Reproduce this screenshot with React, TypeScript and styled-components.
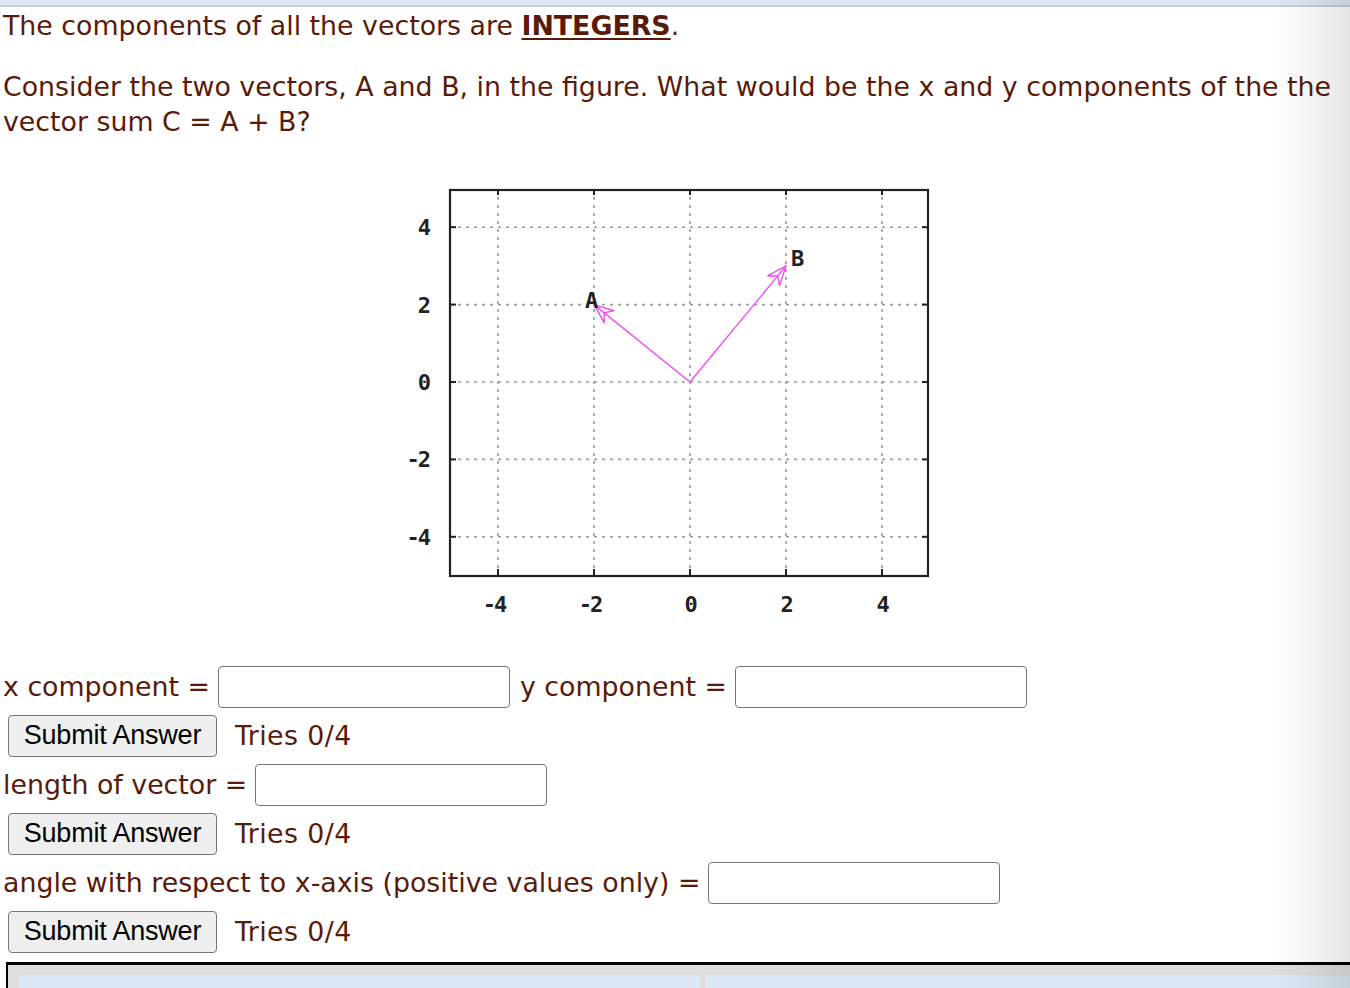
import React from 'react';
import styled, { createGlobalStyle } from 'styled-components';

const GlobalStyle = createGlobalStyle`
  html, body {
    margin: 0;
    padding: 0;
    background: #ffffff;
  }
  body {
    font-family: "DejaVu Sans", Verdana, sans-serif;
    color: #5a1a08;
    overflow: hidden;
  }
`;

const TopBand = styled.div`
  height: 5px;
  background: #dce8f5;
  border-bottom: 2px solid #c9ccd0;
`;

const Page = styled.div`
  padding: 1px 0 0 3px;
  font-size: 26.8px;
  line-height: 35px;
`;

const Para = styled.p<{ gap?: number }>`
  margin: 0 0 ${(p) => p.gap ?? 0}px 0;
  padding-right: 10px;
`;

const Strong = styled.strong`
  text-decoration: underline;
  text-decoration-thickness: 2px;
  text-underline-offset: 3px;
`;

const Figure = styled.div`
  display: flex;
  justify-content: center;
  width: 1350px;
  margin: 36px 0 0 -3px;
  height: 487px;
`;

const Row = styled.div`
  display: flex;
  align-items: center;
  height: 49px;
  white-space: nowrap;
`;

const Label = styled.span`
  margin-right: 8px;
`;

const Field = styled.input`
  width: 292px;
  height: 42px;
  box-sizing: border-box;
  border: 1.5px solid #767676;
  border-radius: 4px;
  background: #fff;
  margin-right: 10px;
  padding: 0 6px;
  font-size: 20px;
`;

const SubmitButton = styled.button`
  margin-left: 5px;
  height: 42px;
  width: 209px;
  box-sizing: border-box;
  border: 1.5px solid #767676;
  border-radius: 4px;
  background: #efefef;
  color: #000;
  font-family: "Liberation Sans", Arial, sans-serif;
  font-size: 27px;
  letter-spacing: -0.2px;
  padding: 0;
`;

const Tries = styled.span`
  margin-left: 18px;
  letter-spacing: 0.4px;
`;

const Frame = styled.div`
  margin: 6px 0 0 6px;
  border-top: 3px solid #000;
  border-left: 2px solid #000;
  background: #dedede;
  padding: 10px 0 0 11px;
  display: grid;
  grid-template-columns: 681px 1fr;
  column-gap: 5px;
  height: 60px;
`;

const Cell = styled.div`
  background: #dce8f5;
`;

const Shade = styled.div`
  position: fixed;
  top: 0;
  right: 0;
  width: 80px;
  height: 100%;
  pointer-events: none;
  background: linear-gradient(to right, rgba(0, 0, 0, 0) 0%, rgba(0, 0, 0, 0.03) 40%, rgba(0, 0, 0, 0.1) 100%);
`;

const X = (u: number) => 290 + 48 * u;
const Y = (v: number) => 207 - 38.7 * v;

function head(x1: number, y1: number, x2: number, y2: number) {
  const a = Math.atan2(y2 - y1, x2 - x1);
  const len = 21;
  const spread = 0.38;
  const lx = x2 - len * Math.cos(a - spread);
  const ly = y2 - len * Math.sin(a - spread);
  const rx = x2 - len * Math.cos(a + spread);
  const ry = y2 - len * Math.sin(a + spread);
  const bx = x2 - 13 * Math.cos(a);
  const by = y2 - 13 * Math.sin(a);
  return `${x2},${y2} ${lx},${ly} ${bx},${by} ${rx},${ry}`;
}

const Plot = () => {
  const ticks = [-4, -2, 0, 2, 4];
  const mag = '#f24cf2';
  const font = "'DejaVu Sans Mono', monospace";
  return (
    <svg width={550} height={450} viewBox="0 0 550 450">
      {ticks.map((t) => (
        <g key={t}>
          <line x1={X(t)} y1={14} x2={X(t)} y2={401} stroke="#9a9a9a" strokeWidth={1.6} strokeDasharray="3 5" />
          <line x1={50} y1={Y(t)} x2={528} y2={Y(t)} stroke="#9a9a9a" strokeWidth={1.6} strokeDasharray="3 5" />
          <line x1={X(t)} y1={14} x2={X(t)} y2={20} stroke="#222" strokeWidth={2} />
          <line x1={X(t)} y1={401} x2={X(t)} y2={394} stroke="#222" strokeWidth={2} />
          <line x1={50} y1={Y(t)} x2={56} y2={Y(t)} stroke="#222" strokeWidth={2} />
          <line x1={528} y1={Y(t)} x2={522} y2={Y(t)} stroke="#222" strokeWidth={2} />
          <text x={29} y={Y(t) + 8} textAnchor="end" fontFamily={font} fontWeight="bold" fontSize={22} letterSpacing={-2} fill="#222">
            {t < 0 ? `-${-t}` : t}
          </text>
          <text x={X(t) + (t < 0 ? -4 : 0)} y={437} textAnchor="middle" fontFamily={font} fontWeight="bold" fontSize={22} letterSpacing={-2} fill="#222">
            {t < 0 ? `-${-t}` : t}
          </text>
        </g>
      ))}
      <rect x={50} y={15} width={478} height={386} fill="none" stroke="#222" strokeWidth={2.2} />
      <line x1={X(0)} y1={Y(0)} x2={X(-2)} y2={Y(2)} stroke={mag} strokeWidth={1.4} />
      <polygon points={head(X(0), Y(0), X(-2), Y(2))} fill="none" stroke={mag} strokeWidth={1.4} />
      <line x1={X(0)} y1={Y(0)} x2={X(2)} y2={Y(3)} stroke={mag} strokeWidth={1.4} />
      <polygon points={head(X(0), Y(0), X(2), Y(3))} fill="none" stroke={mag} strokeWidth={1.4} />
      <text x={185} y={133} fontFamily={font} fontWeight="bold" fontSize={22} fill="#222">A</text>
      <text x={391} y={91} fontFamily={font} fontWeight="bold" fontSize={22} fill="#222">B</text>
    </svg>
  );
};

export default function App() {
  return (
    <>
      <GlobalStyle />
      <TopBand />
      <Page>
        <Para gap={26}>
          The components of all the vectors are <Strong>INTEGERS</Strong>.
        </Para>
        <Para>
          Consider the two vectors, A and B, in the figure. What would be the x and y components of the the vector sum C = A + B?
        </Para>
        <Figure>
          <Plot />
        </Figure>
        <Row>
          <Label>x component =</Label>
          <Field type="text" />
          <Label>y component =</Label>
          <Field type="text" />
        </Row>
        <Row>
          <SubmitButton>Submit Answer</SubmitButton>
          <Tries>Tries 0/4</Tries>
        </Row>
        <Row>
          <Label>length of vector =</Label>
          <Field type="text" />
        </Row>
        <Row>
          <SubmitButton>Submit Answer</SubmitButton>
          <Tries>Tries 0/4</Tries>
        </Row>
        <Row>
          <Label>angle with respect to x-axis (positive values only) =</Label>
          <Field type="text" />
        </Row>
        <Row>
          <SubmitButton>Submit Answer</SubmitButton>
          <Tries>Tries 0/4</Tries>
        </Row>
      </Page>
      <Frame>
        <Cell />
        <Cell />
      </Frame>
      <Shade />
    </>
  );
}
